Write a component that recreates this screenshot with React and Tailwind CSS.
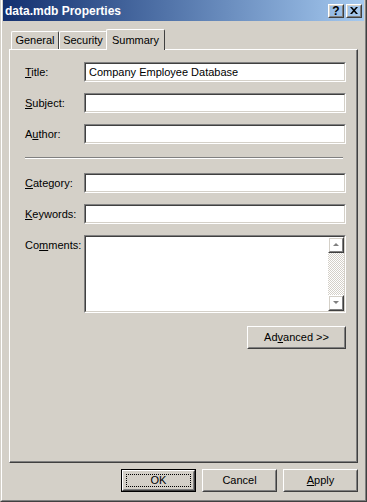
import React from 'react';

const raisedOuter = "border border-t-white border-l-white border-r-[#404040] border-b-[#404040]";
const raisedInner = "border border-t-[#d4d0c8] border-l-[#d4d0c8] border-r-[#808080] border-b-[#808080]";

function Btn({ children, className = "", isDefault = false }) {
  if (isDefault) {
    return (
      <div className={`border border-black ${className}`}>
        <div className={`h-full ${raisedOuter}`}>
          <div className={`h-full ${raisedInner} p-[2px]`}>
            <div className="h-full border border-dotted border-black flex items-center justify-center">{children}</div>
          </div>
        </div>
      </div>
    );
  }
  return (
    <div className={`${raisedOuter} ${className}`}>
      <div className={`h-full ${raisedInner} flex items-center justify-center`}>{children}</div>
    </div>
  );
}

function Field({ className = "", children }) {
  return (
    <div className={`border border-t-[#808080] border-l-[#808080] border-b-white border-r-white ${className}`}>
      <div className="h-full border border-t-[#404040] border-l-[#404040] border-b-[#d4d0c8] border-r-[#d4d0c8] bg-white flex">
        {children}
      </div>
    </div>
  );
}

function Arrow({ up }) {
  return (
    <div className={`w-[16px] h-[16px] shrink-0 ${raisedOuter}`}>
      <div className={`h-full ${raisedInner} flex items-center justify-center`}>
        <svg width="9" height="6" viewBox="0 0 9 6">
          {up ? (
            <>
              <path d="M2 5 L5 2 L8 5 Z" fill="#fff" />
              <path d="M1 4 L4 1 L7 4 Z" fill="#808080" />
            </>
          ) : (
            <>
              <path d="M2 2 L8 2 L5 5 Z" fill="#fff" />
              <path d="M1 1 L7 1 L4 4 Z" fill="#808080" />
            </>
          )}
        </svg>
      </div>
    </div>
  );
}

function Row({ label, value, className = "" }) {
  return (
    <div className={`flex items-center h-[20px] ${className}`}>
      <div className="w-[59px] shrink-0">{label}</div>
      <Field className="w-[262px] h-[20px]">
        {value && <span className="pl-[3px] leading-[16px]">{value}</span>}
      </Field>
    </div>
  );
}

export default function App() {
  return (
    <div className="w-[367px] h-[502px] bg-[#d4d0c8] border-l border-r border-b border-l-[#d4d0c8] border-r-[#404040] border-b-[#404040] font-['Liberation_Sans',Arial,sans-serif] text-[11px] text-black overflow-hidden">
      <div className="h-full border-l border-r border-b border-l-white border-r-[#808080] border-b-[#808080] px-[1px] flex flex-col">
        {/* Title bar */}
        <div className="h-[21px] shrink-0 bg-gradient-to-r from-[#14306f] to-[#a6caf0] flex items-center pl-[2px] pr-[2px]">
          <span className="text-white font-bold text-[12px]">data.mdb Properties</span>
          <div className="ml-auto flex gap-[2px]">
            <Btn className="w-[16px] h-[14px]">
              <span className="font-bold text-[12px] leading-none">?</span>
            </Btn>
            <Btn className="w-[16px] h-[14px]">
              <svg width="8" height="7" viewBox="0 0 8 7">
                <path d="M0 0h2l2 2.2L6 0h2L5 3.5 8 7H6L4 4.8 2 7H0l3-3.5z" fill="#000" />
              </svg>
            </Btn>
          </div>
        </div>

        <div className="px-[6px] pt-[8px] flex flex-col">
          {/* Tabs */}
          <div className="flex items-end h-[20px] pl-[2px]">
            <div className="w-[48px] h-[18px] border-t border-l border-r border-t-white border-l-white border-r-[#404040] rounded-t-[2px] flex items-center justify-center">
              General
            </div>
            <div className="w-[48px] h-[18px] border-t border-l border-r border-t-white border-l-white border-r-[#404040] rounded-t-[2px] flex items-center justify-center">
              Security
            </div>
            <div className="relative z-10 -ml-[1px] -mb-[1px] w-[59px] h-[21px] bg-[#d4d0c8] border-t border-l border-r border-t-white border-l-white border-r-[#404040] rounded-t-[2px] flex items-start justify-center pt-[2px]">
              Summary
            </div>
          </div>

          {/* Panel */}
          <div className="h-[414px] border border-t-white border-l-white border-r-[#404040] border-b-[#404040]">
            <div className="h-full border-r border-b border-r-[#808080] border-b-[#808080] pl-[15px] pt-[12px] flex flex-col">
              <Row label={<><u>T</u>itle:</>} value="Company Employee Database" />
              <Row label={<><u>S</u>ubject:</>} className="mt-[11px]" />
              <Row label={<>A<u>u</u>thor:</>} className="mt-[11px]" />

              <div className="mt-[13px] w-[318px] h-[2px] border-t border-b border-t-[#808080] border-b-white" />

              <Row label={<><u>C</u>ategory:</>} className="mt-[14px]" />
              <Row label={<><u>K</u>eywords:</>} className="mt-[11px]" />

              <div className="flex mt-[11px]">
                <div className="w-[59px] shrink-0 pt-[2px]">Co<u>m</u>ments:</div>
                <Field className="w-[262px] h-[78px]">
                  <div className="flex-1" />
                  <div className="w-[16px] flex flex-col">
                    <Arrow up />
                    <div className="flex-1 bg-[repeating-conic-gradient(#d4d0c8_0_25%,#ffffff_0_50%)] bg-[length:2px_2px]" />
                    <Arrow />
                  </div>
                </Field>
              </div>

              <div className="flex justify-end w-[321px] mt-[13px]">
                <Btn className="w-[99px] h-[23px]">
                  Ad<u>v</u>anced &gt;&gt;
                </Btn>
              </div>
            </div>
          </div>

          {/* Bottom buttons */}
          <div className="flex justify-end gap-[6px] mt-[6px]">
            <Btn isDefault className="w-[75px] h-[23px]">OK</Btn>
            <Btn className="w-[75px] h-[23px]">Cancel</Btn>
            <Btn className="w-[75px] h-[23px]"><u>A</u>pply</Btn>
          </div>
        </div>
      </div>
    </div>
  );
}
